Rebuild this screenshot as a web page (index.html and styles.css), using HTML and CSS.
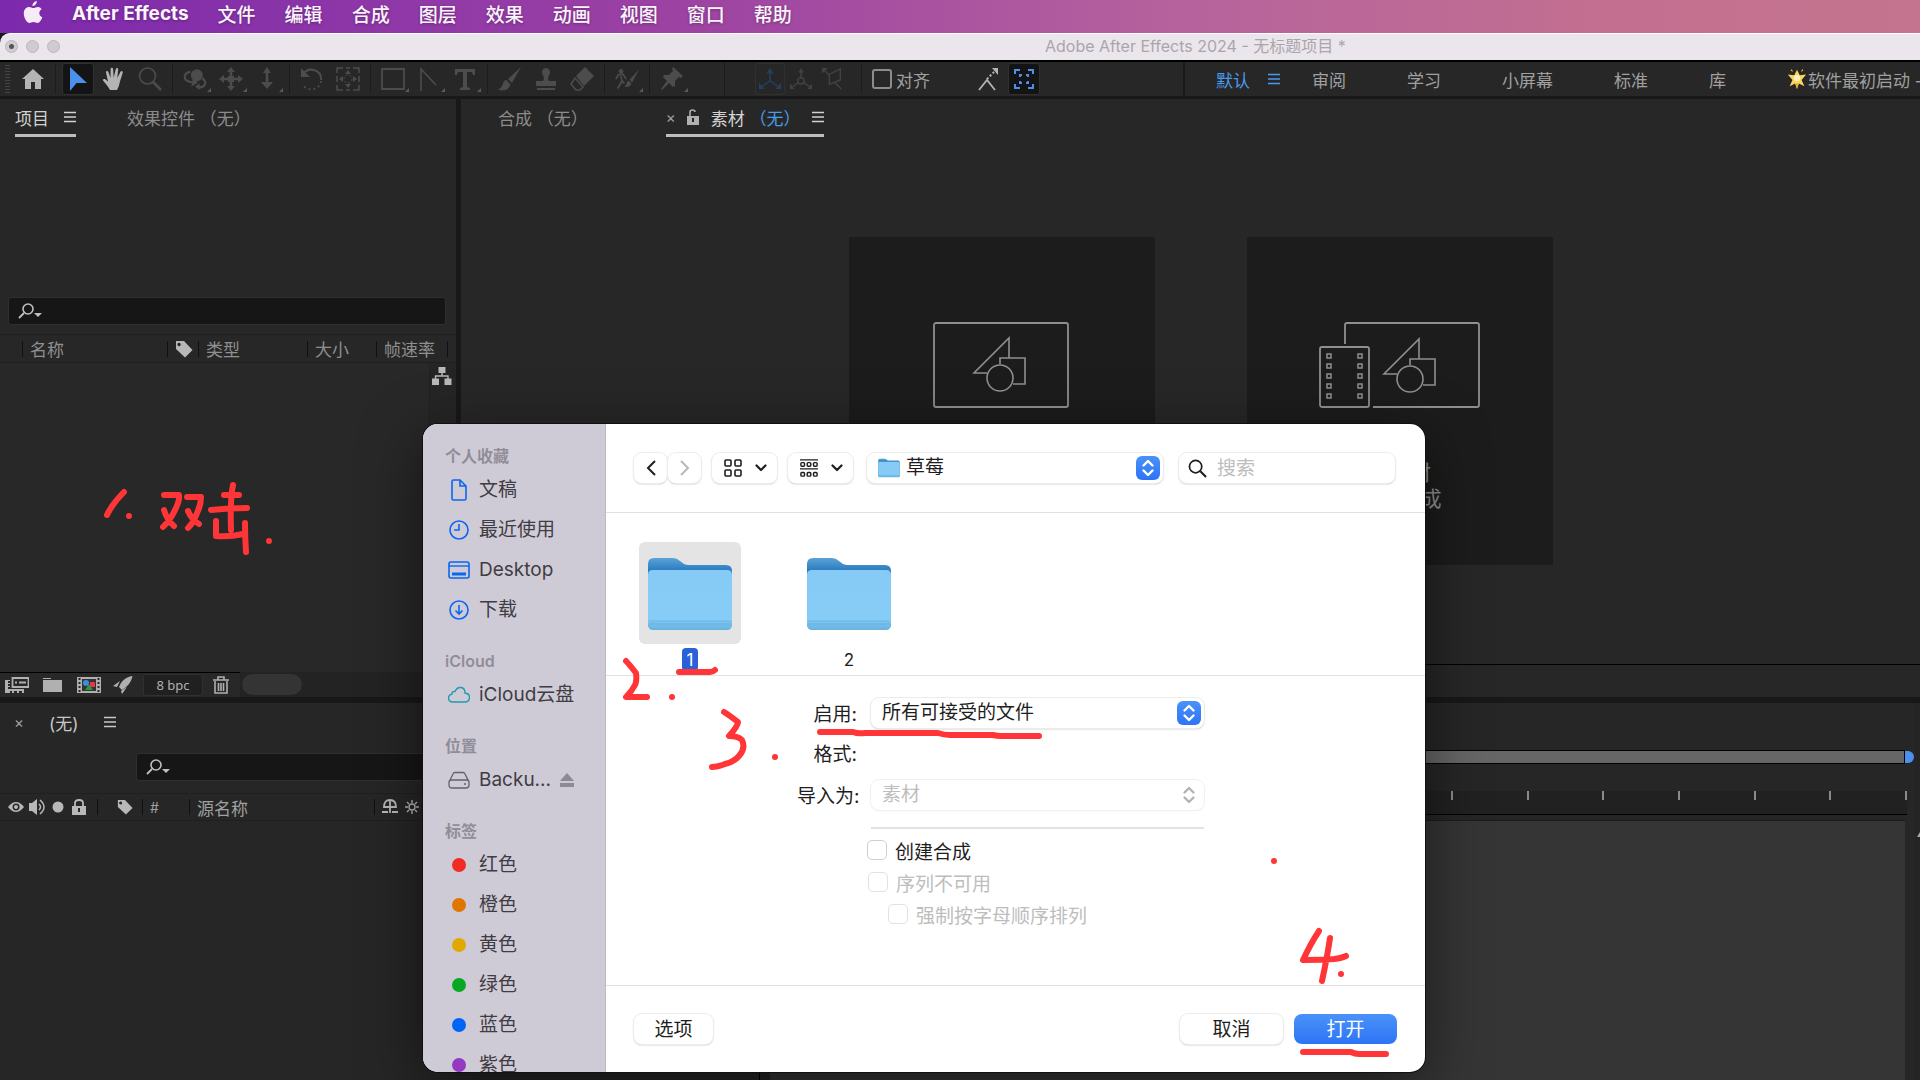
FILE: index.html
```
<!DOCTYPE html>
<html lang="zh-CN">
<head>
  <meta charset="UTF-8">
  <meta name="viewport" content="width=device-width, initial-scale=1.0">
  <title>Adobe After Effects 2024 - 无标题项目</title>
  <link rel="stylesheet" href="styles.css">
</head>
<body>
  <!-- 公用图标 -->
  <svg class="sprite" width="0" height="0" aria-hidden="true">
    <linearGradient id="folder-front" x1="0" y1="0" x2="0" y2="1">
      <stop offset="0" stop-color="#86cbf6"/>
      <stop offset="0.84" stop-color="#86ccf7"/>
      <stop offset="0.86" stop-color="#7cc5f1"/>
      <stop offset="1" stop-color="#68b2e0"/>
    </linearGradient>
    <linearGradient id="folder-back" x1="0" y1="0" x2="0" y2="1">
      <stop offset="0" stop-color="#5ba3d6"/>
      <stop offset="0.16" stop-color="#2f7fc2"/>
      <stop offset="1" stop-color="#2f7fc2"/>
    </linearGradient>
    <symbol id="i-folder" viewBox="0 0 86 74">
      <path d="M1 67V7q0-6 6-6h19q4 0 7 3l4 3q2 1 5 1h37q6 0 6 6v53q0 5-5 5H6q-5 0-5-5z" fill="url(#folder-back)"/>
      <path d="M1 67V18q0-5 5-5h74q5 0 5 5v49q0 6-5 6H6q-5 0-5-6z" fill="url(#folder-front)"/>
      <path d="M2 64h82M2 67h82" stroke="#5faadb" stroke-width="0.6"/>
    </symbol>
    <symbol id="i-menu" viewBox="0 0 12 12">
      <path d="M0 1.500h12M0 6h12M0 10.500h12" stroke="currentColor" stroke-width="1.500"/>
    </symbol>
    <symbol id="i-find" viewBox="0 0 24 16">
      <circle cx="10" cy="6" r="5" fill="none" stroke="currentColor" stroke-width="1.600"/>
      <path d="M6 10l-5 5" stroke="currentColor" stroke-width="1.800"/>
      <path d="M16 10h8l-4 4z" fill="currentColor"/>
    </symbol>
    <symbol id="i-tag" viewBox="0 0 18 18">
      <path fill="currentColor" fill-rule="evenodd" d="M1 1h8l8.500 9-7.500 7.500L1 9zM4 2.800a1.700 1.700 0 1 0 .1 3.400A1.700 1.700 0 0 0 4 2.800z"/>
    </symbol>
    <symbol id="i-updown" viewBox="0 0 24 24">
      <path d="M7.500 9.500L12 5l4.500 4.500M7.500 14.500L12 19l4.500-4.500" fill="none" stroke="currentColor" stroke-width="2.400" stroke-linecap="round" stroke-linejoin="round"/>
    </symbol>
    <symbol id="i-down" viewBox="0 0 12 8">
      <path d="M1.500 1.500L6 6l4.500-4.500" fill="none" stroke="currentColor" stroke-width="2.200" stroke-linecap="round" stroke-linejoin="round"/>
    </symbol>
    <symbol id="i-shapes" viewBox="0 0 56 56">
      <g fill="none" stroke="currentColor" stroke-width="1.600">
        <path d="M15 37H2L37 2v20M28 28v-6h25v26H41"/>
        <circle cx="28" cy="42" r="13"/>
      </g>
    </symbol>
  </svg>

  <!-- 系统菜单栏 -->
  <nav class="menubar">
    <svg class="apple" viewBox="0 0 20 24"><path fill="#f6ecf8" d="M13.800 0c.2 2.700-2 5-4.300 5C9.200 2.500 11.500.2 13.800 0zM18.600 8.200c-3.400 2-2.900 6.600.7 8-.9 2.700-2.700 5.700-4.700 5.700-1.600 0-2.200-1-4.100-1s-2.600 1-4 1C3.700 22 .8 16.800.8 12.500.8 8.300 3.400 6 6 6c1.800 0 3 1.100 4.400 1.100S13 5.900 15 5.900c1.400 0 2.800.8 3.600 2.300z"/></svg>
    <b class="app-name">After Effects</b>
    <a href="#">文件</a>
    <a href="#">编辑</a>
    <a href="#">合成</a>
    <a href="#">图层</a>
    <a href="#">效果</a>
    <a href="#">动画</a>
    <a href="#">视图</a>
    <a href="#">窗口</a>
    <a href="#">帮助</a>
  </nav>

  <!-- 窗口标题栏 -->
  <header class="titlebar">
    <div class="lights"><i class="edited"></i><i></i><i></i></div>
    <span class="title">Adobe After Effects 2024 - 无标题项目 *</span>
  </header>

  <!-- 工具栏 -->
  <div class="toolbar">
    <i class="grip"></i>
    <button class="tool lit" aria-label="主页"><svg viewBox="0 0 24 24"><path fill="currentColor" d="M12 2L1 12h3v10h6v-7h4v7h6V12h3z"/></svg></button>
    <i class="sep"></i>
    <button class="tool active" aria-label="选取"><svg viewBox="0 0 24 24"><path fill="currentColor" d="M4 0v24l6.500-8H21z"/></svg></button>
    <button class="tool lit" aria-label="手形"><svg viewBox="0 0 24 24"><path fill="currentColor" d="M8 23C6 19 3 16 1 13.500c-.8-1.200 1-2.200 2.200-1.200L6 14.500 4 5.500c-.4-1.800 1.900-2.200 2.400-.5L8.500 11 8.600 2c0-1.800 2.400-1.800 2.500 0l.6 8.500L13.800 2c.4-1.700 2.600-1.200 2.400.5L15.300 11l3.200-6.200c.8-1.500 2.700-.6 2.200 1L17.800 15c-.6 3-1.300 5.500-2.800 8z"/></svg></button>
    <button class="tool" aria-label="缩放"><svg viewBox="0 0 24 24"><circle cx="9.500" cy="9" r="8" fill="none" stroke="currentColor" stroke-width="1.600"/><path d="M15 15l8 8" stroke="currentColor" stroke-width="2.600"/></svg></button>
    <i class="sep"></i>
    <button class="tool more" aria-label="绕光标旋转"><svg viewBox="0 0 26 24"><circle cx="15" cy="8" r="6.500" fill="currentColor"/><path d="M8 4C0 6 0 13 7 15l6 1M21 11c5 4 4 10-4 10" fill="none" stroke="currentColor" stroke-width="2.400"/><path d="M11 10l5 6-7 4zM18 17v7l-5-4z" fill="currentColor"/></svg></button>
    <button class="tool more" aria-label="平移"><svg viewBox="0 0 24 24"><path d="M12 3v18M3 12h18" stroke="currentColor" stroke-width="2.600"/><path fill="currentColor" d="M12 0l4 5H8zM12 24l4-5H8zM0 12l5-4v8zM24 12l-5-4v8zM9 9h6v6H9z"/></svg></button>
    <button class="tool more" aria-label="推拉"><svg viewBox="0 0 24 24"><path d="M12 3v16" stroke="currentColor" stroke-width="2.600"/><path fill="currentColor" d="M12 0l4 6H8zM12 22l6-7H6z"/></svg></button>
    <i class="sep"></i>
    <button class="tool" aria-label="旋转"><svg viewBox="0 0 24 24"><path d="M3 7c6-8 19-4 18 6" fill="none" stroke="currentColor" stroke-width="2"/><path d="M21 14c-1 9-13 12-19 3" fill="none" stroke="currentColor" stroke-width="1.800" stroke-dasharray="2 3"/><path fill="currentColor" d="M1 1v9h9z"/></svg></button>
    <button class="tool" aria-label="向后平移"><svg viewBox="0 0 24 24"><path d="M1 6V1h6M10 1h4M17 1h6v5M23 9v6M23 18v5h-6M14 23h-4M7 23H1v-5M1 15V9" fill="none" stroke="currentColor" stroke-width="1.600"/><path fill="currentColor" d="M12 3l3 4H9zM12 21l3-4H9zM3 12l4-3v6zM21 12l-4-3v6z"/><circle cx="12" cy="12" r="4" fill="none" stroke="currentColor" stroke-dasharray="2 2"/></svg></button>
    <i class="sep"></i>
    <button class="tool more" aria-label="矩形"><svg viewBox="0 0 24 24"><path d="M1 2h22v20H1z" fill="none" stroke="currentColor" stroke-width="1.800"/></svg></button>
    <button class="tool more" aria-label="钢笔"><svg viewBox="0 0 24 24"><path d="M4 24V2l15 16" fill="none" stroke="currentColor" stroke-width="1.600"/></svg></button>
    <button class="tool more" aria-label="文字"><svg viewBox="0 0 24 24"><path d="M2 2h20v6h-2l-1-3h-5v15l3 1v2H7v-2l3-1V5H5L4 8H2z" fill="currentColor"/></svg></button>
    <i class="sep"></i>
    <button class="tool" aria-label="画笔"><svg viewBox="0 0 24 24"><path fill="currentColor" d="M23 0L10 12l4 4zM8.500 13c-3 0-3 3-4.500 6-1 2-2.500 3-4 3.500 6 2 11 .5 12.500-5z"/></svg></button>
    <button class="tool" aria-label="仿制图章"><svg viewBox="0 0 24 24"><path fill="currentColor" d="M12 1a4.500 4.500 0 0 0-3 7.500c1.500 2 1 4 0 5.500H2v5h20v-5h-7c-1-1.500-1.500-3.500 0-5.500A4.500 4.500 0 0 0 12 1zM3 21h18v2H3z"/></svg></button>
    <button class="tool" aria-label="橡皮擦"><svg viewBox="0 0 24 24"><path fill="currentColor" d="M15 0l9 9-10 10-8-10z"/><path d="M5 11l8 9-3 3H6l-5-6z" fill="none" stroke="currentColor" stroke-width="1.600"/></svg></button>
    <i class="sep"></i>
    <button class="tool more" aria-label="Roto 笔刷"><svg viewBox="0 0 28 24"><circle cx="7" cy="3" r="2.600" fill="currentColor"/><path d="M1 12l3-5 5-1 4 6M7 8l1 7-5 8M8 14l3 3" fill="none" stroke="currentColor" stroke-width="2"/><path fill="currentColor" d="M28 1L17 13l3 3zM16 14c-3 1-2 5-5 7 5 1 8-1 8-4z"/></svg></button>
    <i class="sep"></i>
    <button class="tool more" aria-label="人偶位置控点"><svg viewBox="0 0 24 24"><path fill="currentColor" d="M13 0l10 9-2 2-2-1-4 4v5l-2 1-4-4-7 7-1-1 6-8-4-4 1-2h5l4-4-1-2z"/></svg></button>
    <i class="sep wide"></i>
    <button class="axis boxed" aria-label="本地轴模式"><svg viewBox="0 0 24 24"><path d="M12 3v11L2 21M12 14l10 7" fill="none" stroke="currentColor" stroke-width="1.600"/><path fill="currentColor" d="M12 0l4 6H8zM0 23v-7l6 7zM24 23v-7l-6 7z"/></svg></button>
    <button class="axis" aria-label="世界轴模式"><svg viewBox="0 0 24 24"><path d="M12 3v9M9 16l-7 5M15 16l7 5" fill="none" stroke="currentColor" stroke-width="1.600"/><circle cx="12" cy="14" r="3.500" fill="none" stroke="currentColor" stroke-width="1.600"/><path fill="currentColor" d="M12 0l3 5H9zM0 23v-6l5 6zM24 23v-6l-5 6z"/></svg></button>
    <button class="axis" aria-label="视图轴模式"><svg viewBox="0 0 24 24"><path d="M2 2l6 6v10l12-5V1L8 7M14 16l7 7" fill="none" stroke="currentColor" stroke-width="1.600"/><path fill="currentColor" d="M0 0h6L0 6z"/></svg></button>
    <i class="sep"></i>
    <label class="snap"><input type="checkbox">对齐</label>
    <button class="tool lit" aria-label="对齐边缘"><svg viewBox="0 0 24 24"><path d="M3 23l8-10 8 10" fill="none" stroke="currentColor" stroke-width="1.800"/><path d="M11 12l8-8" stroke="currentColor" stroke-width="2" stroke-dasharray="2 2"/><path fill="currentColor" d="M16 1h6v7z"/></svg></button>
    <button class="tool active" aria-label="对齐特征"><svg viewBox="0 0 24 24"><g fill="none" stroke="currentColor" stroke-width="2"><path d="M3 7V3h5M16 3h5v4M21 17v4h-5M8 21H3v-4"/><path d="M8 10V8h2M14 8h2v2M16 14v2h-2M10 16H8v-2"/></g></svg></button>
    <div class="workspaces">
      <a class="current" href="#">默认</a>
      <svg class="menu-icon current"><use href="#i-menu"/></svg>
      <a href="#">审阅</a>
      <a href="#">学习</a>
      <a href="#">小屏幕</a>
      <a href="#">标准</a>
      <a href="#">库</a>
      <a class="custom" href="#"><svg viewBox="0 0 20 24"><path fill="#fbd45e" d="M10 2l3 6 7-1-5 6 3 7-6-3-2 6-2-6-6 3 3-7-5-6 7 1z"/><path fill="#f0a72e" d="M10 23l-2-6h4zM4 1l2 3-3-1zM16 1l-2 3 3-1z"/><circle cx="10" cy="11" r="3.500" fill="#fff3c0"/></svg>软件最初启动 -</a>
    </div>
  </div>

  <main class="upper">
    <!-- 项目面板 -->
    <section class="panel project">
      <div class="tabs">
        <div class="tab selected">项目 <svg class="menu-icon"><use href="#i-menu"/></svg></div>
        <div class="tab dim">效果控件 （无）</div>
      </div>
      <label class="find project-find"><svg><use href="#i-find"/></svg><input type="text" aria-label="搜索项目"></label>
      <table class="columns">
        <thead>
          <tr>
            <th class="c-pad"></th>
            <th class="c-name"><span>名称</span></th>
            <th class="c-tag"><span><svg><use href="#i-tag"/></svg></span></th>
            <th class="c-type"><span>类型</span></th>
            <th class="c-size"><span>大小</span></th>
            <th class="c-rate"><span>帧速率</span></th>
            <th><span></span></th>
          </tr>
        </thead>
      </table>
      <div class="project-list">
        <button class="flow" aria-label="项目流程图"><svg viewBox="0 0 20 18"><path fill="currentColor" d="M6.500 0h7v6h-7zM0 11.500h7V18H0zM12.500 11.500h7V18h-7z"/><path d="M10 6v3M3.500 12V9h12.500v3" fill="none" stroke="currentColor" stroke-width="1.400"/></svg></button>
      </div>
      <div class="project-foot">
        <div class="foot-tools">
          <button aria-label="解释素材"><svg viewBox="0 0 24 16"><path fill="currentColor" d="M0 3h5v1H3v2h2v1H3v2h2v1H3v2h16v4h-2v-2h-3v2h-2v-2H9v2H7v-2H5v2H0z"/><path d="M7.500 1h16v9h-16z" fill="#282828" stroke="currentColor" stroke-width="1.800"/><path d="M10 5.500h2M14 5.500h7" stroke="currentColor" stroke-width="1.800"/></svg></button>
          <button aria-label="新建文件夹"><svg viewBox="0 0 24 16"><path fill="currentColor" d="M2 1h8v1H2zM2 3h19v12H2z"/></svg></button>
          <button aria-label="新建合成"><svg viewBox="0 0 24 16"><path fill="#b0b0b0" d="M0 0h24v16H0z"/><path d="M2.500 1v15M21.500 1v15" stroke="#282828" stroke-width="2" stroke-dasharray="2 2"/><path fill="#333" d="M5 2h14v12H5z"/><circle cx="9" cy="6" r="3" fill="#3d8be8"/><path fill="#e34" d="M13 5h5v5h-5z"/><path fill="#2b9a33" d="M12 7l4 6H8z"/></svg></button>
          <button aria-label="项目设置"><svg viewBox="0 0 20 18"><path fill="currentColor" d="M19.500 0C12 1 8 6 6 11l3 3c5-3 9-7 10.500-14zM7 5L0 10l4 1zM14 11l-5 7-1-3z"/></svg></button>
          <button class="depth">8 bpc</button>
          <button aria-label="删除"><svg viewBox="0 0 16 18"><path d="M0 4h16M5 4V1h6v3M2 5v12h12V5M5.500 7v8M8 7v8M10.500 7v8" fill="none" stroke="currentColor" stroke-width="1.600"/></svg></button>
        </div>
        <i class="scroll-thumb"></i>
      </div>
    </section>

    <!-- 合成 / 素材面板 -->
    <section class="panel viewer">
      <div class="tabs">
        <div class="tab dim">合成 （无）</div>
        <div class="tab selected footage">
          <button class="close" aria-label="关闭">×</button>
          <svg class="lock" viewBox="0 0 14 16"><path fill="currentColor" fill-rule="evenodd" d="M1 7h12v9H1zM6 9v4h2V9z"/><path d="M4 7V3q0-2 2.500-2T9 3" fill="none" stroke="currentColor" stroke-width="1.600"/></svg>
          <span>素材 <em>（无）</em></span>
          <svg class="menu-icon"><use href="#i-menu"/></svg>
        </div>
      </div>
      <div class="starters">
        <button class="starter">
          <svg class="art" viewBox="0 0 162 86"><rect x="13" y="1" width="134" height="84" rx="2" fill="none" stroke="currentColor" stroke-width="1.800"/><use href="#i-shapes" x="51" y="14" width="56" height="56"/></svg>
          <span>新建合成</span>
        </button>
        <button class="starter">
          <svg class="art" viewBox="0 0 162 86"><g fill="none" stroke="currentColor" stroke-width="1.800"><path d="M26 22V3q0-2 2-2h130q2 0 2 2v80q0 2-2 2H54"/><rect x="1" y="25" width="49" height="60" rx="2"/></g><g fill="none" stroke="currentColor" stroke-width="1.500"><path d="M8 32h4v4H8zM8 42h4v4H8zM8 52h4v4H8zM8 62h4v4H8zM8 72h4v4H8zM39 32h4v4h-4zM39 42h4v4h-4zM39 52h4v4h-4zM39 62h4v4h-4zM39 72h4v4h-4z"/></g><use href="#i-shapes" x="63" y="15" width="56" height="56"/></svg>
          <span>从素材<br>新建合成</span>
        </button>
      </div>
      <div class="viewer-foot"></div>
    </section>
  </main>

  <!-- 时间轴 -->
  <section class="timeline">
    <div class="layers">
      <div class="timeline-tab">
        <button class="close" aria-label="关闭">×</button>
        <span>(无)</span>
        <svg class="menu-icon"><use href="#i-menu"/></svg>
      </div>
      <label class="find layer-find"><svg><use href="#i-find"/></svg><input type="text" aria-label="搜索图层"></label>
      <div class="layer-head">
        <div class="switches">
          <svg viewBox="0 0 16 16"><path fill="currentColor" fill-rule="evenodd" d="M0 8q8-10 16 0-8 10-16 0zM8 4.500a3.500 3.500 0 1 0 .1 7 3.500 3.500 0 0 0-.1-7z"/><circle cx="8" cy="8" r="2" fill="currentColor"/></svg>
          <svg viewBox="0 0 16 16"><path fill="currentColor" d="M0 4h3l5-4v16l-5-4H0z"/><path d="M10 5q3 3 0 6M11 1q8 7 0 14" fill="none" stroke="currentColor" stroke-width="1.500"/></svg>
          <svg viewBox="0 0 16 16"><circle cx="8" cy="8" r="5.500" fill="currentColor"/></svg>
          <svg viewBox="0 0 16 16"><path fill="currentColor" fill-rule="evenodd" d="M1 7h14v9H1zM7 9v4h2V9z"/><path d="M4 7V4q0-3 4-3t4 3v3" fill="none" stroke="currentColor" stroke-width="1.800"/></svg>
        </div>
        <div class="head-cell h-tag"><svg><use href="#i-tag"/></svg></div>
        <div class="head-cell h-num">#</div>
        <div class="head-cell h-source">源名称</div>
        <div class="head-cell h-modes">
          <svg viewBox="0 0 16 16"><path d="M2 8q0-7 6-7t6 7zM8 1v13M0 13h6M10 13h6" fill="none" stroke="currentColor" stroke-width="1.800"/></svg>
          <svg viewBox="0 0 16 16"><circle cx="8" cy="8" r="3" fill="none" stroke="currentColor" stroke-width="1.400"/><path d="M8 1v3M8 12v3M1 8h3M12 8h3M3 3l2 2M11 11l2 2M13 3l-2 2M5 11l-2 2" stroke="currentColor" stroke-width="1.400"/></svg>
        </div>
      </div>
    </div>
    <div class="tracks">
      <div class="work-area"><i class="handle"></i></div>
      <div class="ruler">
        <i></i><i></i><i></i><i></i><i></i><i></i><i></i><i></i>
        <i></i><i></i><i></i><i></i><i></i><i></i><i></i><i></i>
      </div>
      <div class="track-body"></div>
    </div>
    <div class="gutter"><i></i></div>
  </section>

  <!-- 导入文件对话框 -->
  <div class="dialog" role="dialog" aria-label="导入文件">
    <aside class="sidebar">
      <h3>个人收藏</h3>
      <a href="#"><svg class="blue" viewBox="0 0 22 22"><path d="M4 2.500Q4 1 5.500 1H12l6 6v12.500q0 1.500-1.500 1.500h-11Q4 21 4 19.500zM12 1v6h6" fill="none" stroke="currentColor" stroke-width="1.600"/></svg>文稿</a>
      <a href="#"><svg class="blue" viewBox="0 0 22 22"><circle cx="11" cy="11" r="9" fill="none" stroke="currentColor" stroke-width="1.600"/><path d="M11 5v6H6" fill="none" stroke="currentColor" stroke-width="1.600"/></svg>最近使用</a>
      <a href="#"><svg class="blue" viewBox="0 0 22 22"><rect x="1" y="3" width="20" height="16" rx="2" fill="none" stroke="currentColor" stroke-width="1.600"/><path d="M1 7h20" stroke="currentColor" stroke-width="1.400"/><path d="M4 15h14" stroke="currentColor" stroke-width="3"/></svg>Desktop</a>
      <a href="#"><svg class="blue" viewBox="0 0 22 22"><circle cx="11" cy="11" r="9" fill="none" stroke="currentColor" stroke-width="1.600"/><path d="M11 6v9M7.500 11.500L11 15l3.500-3.500" fill="none" stroke="currentColor" stroke-width="1.600"/></svg>下载</a>
      <h3>iCloud</h3>
      <a href="#"><svg class="teal" viewBox="0 0 22 22"><path d="M5 18q-4.500 0-4.500-4 0-3 3.500-4 0-3 3-2.500Q9 3 13 3.500t4 5.500q4.500.5 4.500 4.500T17 18z" fill="none" stroke="currentColor" stroke-width="1.400"/></svg>iCloud云盘</a>
      <h3>位置</h3>
      <a href="#"><svg class="gray" viewBox="0 0 22 22"><path d="M1 13l4-8q.5-1.500 2-1.500h8q1.500 0 2 1.500l4 8v3q0 3-3 3H4q-3 0-3-3zq0-2 3-2h14q3 0 3 2" fill="none" stroke="currentColor" stroke-width="1.300"/><circle cx="17" cy="15" r="1" fill="currentColor"/></svg>Backu...<svg class="eject" viewBox="0 0 14 14"><path fill="currentColor" d="M7 0l7 8H0zM0 10h14v4H0z"/></svg></a>
      <h3>标签</h3>
      <a href="#"><i class="dot red"></i>红色</a>
      <a href="#"><i class="dot orange"></i>橙色</a>
      <a href="#"><i class="dot yellow"></i>黄色</a>
      <a href="#"><i class="dot green"></i>绿色</a>
      <a href="#"><i class="dot azure"></i>蓝色</a>
      <a href="#"><i class="dot purple"></i>紫色</a>
    </aside>

    <div class="browser">
      <div class="browser-bar">
        <div class="nav">
          <button class="ctl" aria-label="后退"><svg viewBox="0 0 10 16"><path d="M9 1L2 8l7 7" fill="none" stroke="currentColor" stroke-width="2"/></svg></button>
          <button class="ctl off" aria-label="前进"><svg viewBox="0 0 10 16"><path d="M1 1l7 7-7 7" fill="none" stroke="currentColor" stroke-width="2"/></svg></button>
        </div>
        <button class="ctl view" aria-label="图标视图"><svg class="grid-icon" viewBox="0 0 20 18"><g fill="none" stroke="currentColor" stroke-width="1.600"><rect x="2" y="1" width="6" height="6" rx="1"/><rect x="12" y="1" width="6" height="6" rx="1"/><rect x="2" y="11" width="6" height="6" rx="1"/><rect x="12" y="11" width="6" height="6" rx="1"/></g></svg><svg class="chev"><use href="#i-down"/></svg></button>
        <button class="ctl view" aria-label="分组"><svg class="grid-icon" viewBox="0 0 20 20"><path d="M0 1h20M0 11h20" stroke="currentColor" stroke-width="1.600"/><g fill="none" stroke="currentColor" stroke-width="1.600"><rect x="1" y="4" width="4" height="4" rx="1"/><rect x="8" y="4" width="4" height="4" rx="1"/><rect x="15" y="4" width="4" height="4" rx="1"/><rect x="1" y="15" width="4" height="4" rx="1"/><rect x="8" y="15" width="4" height="4" rx="1"/><rect x="15" y="15" width="4" height="4" rx="1"/></g></svg><svg class="chev"><use href="#i-down"/></svg></button>
        <div class="picker place">
          <svg class="small-folder"><use href="#i-folder"/></svg>
          <select aria-label="位置"><option>草莓</option></select>
          <svg class="stepper"><use href="#i-updown"/></svg>
        </div>
        <label class="search"><svg viewBox="0 0 20 20"><circle cx="8" cy="8" r="6.500" fill="none" stroke="currentColor" stroke-width="1.800"/><path d="M13 13l6 6" stroke="currentColor" stroke-width="2.200"/></svg><input type="text" placeholder="搜索"></label>
      </div>

      <div class="files">
        <button class="file chosen"><span class="thumb"><svg><use href="#i-folder"/></svg></span><span class="name">1</span></button>
        <button class="file"><span class="thumb"><svg><use href="#i-folder"/></svg></span><span class="name">2</span></button>
      </div>

      <div class="options">
        <label for="enable">启用:</label>
        <div class="picker">
          <select id="enable"><option>所有可接受的文件</option></select>
          <svg class="stepper"><use href="#i-updown"/></svg>
        </div>
        <span class="format">格式:</span>
        <span></span>
        <label for="import-as">导入为:</label>
        <div class="picker off">
          <select id="import-as" disabled><option>素材</option></select>
          <svg class="stepper"><use href="#i-updown"/></svg>
        </div>
        <div class="checks">
          <label><input type="checkbox">创建合成</label>
          <label class="off"><input type="checkbox" disabled>序列不可用</label>
          <label class="off nested"><input type="checkbox" disabled>强制按字母顺序排列</label>
        </div>
      </div>

      <div class="actions">
        <button class="ctl small">选项</button>
        <button class="ctl">取消</button>
        <button class="ctl primary">打开</button>
      </div>
    </div>
  </div>

  <!-- 手写步骤标注 -->
  <svg class="ink" viewBox="0 0 1920 1080" aria-hidden="true">
    <g fill="none" stroke="#ff3537" stroke-width="6" stroke-linecap="round" stroke-linejoin="round">
      <path d="M124 492Q112 504 107 515M129 516v.1"/>
      <path d="M164 495h15q1 5-4 15-4 9-12 17M164 510q3 10 10 16M187 497h14q0 8-4 16-3 9-9 15M188 511q4 9 11 13"/>
      <path d="M233 485q-3 14-2 45M224 495h15M211 510q18-2 36-2M216 521v15q14 1 27-2M245 523q0 14 1 29M269 541v.1"/>
      <path d="M626 661q3 3 10 12 1 8-1 12-3 6-9 12h21M672 697v.1"/>
      <path d="M679 672h31q3 0 5-2"/>
      <path d="M724 712q5 3 14 10 0 4-9 14 9 0 13 4 4 8-3 16-5 6-14 8-8 3-13 3M775 757v.1"/>
      <path d="M820 732h33q5 2 12 1h73q6 2 12 2h43q4 1 8 1h38"/>
      <path d="M1319 931q-8 12-16 29 17 0 31-1 8-1 12-3M1330 938q-3 20-8 43M1341 974v.1"/>
      <path d="M1303 1052h48q4 2 8 2h27M1274 861v.1"/>
    </g>
  </svg>
</body>
</html>
```
FILE: styles.css
```
* {
  box-sizing: border-box;
}
body {
  margin: 0;
  height: 100vh;
  display: flex;
  flex-direction: column;
  overflow: hidden;
  position: relative;
  background: #181818;
  color: #a0a0a0;
  font-family: Inter, "Noto Sans CJK SC", sans-serif;
  font-size: 17px;
}
button,
input,
select {
  font: inherit;
  color: inherit;
  margin: 0;
}
button {
  background: none;
  border: none;
  padding: 0;
}
a {
  color: inherit;
  text-decoration: none;
}
svg {
  display: block;
  flex: none;
}
.sprite {
  position: absolute;
}

/* 菜单栏 */
.menubar {
  flex: none;
  height: 33px;
  padding: 0 0 7px 23px;
  display: flex;
  align-items: center;
  gap: 29px;
  font-size: 19px;
  font-weight: 500;
  color: #fbf4fc;
  white-space: nowrap;
  background: linear-gradient(90deg, #7c29ad 0%, #9c42a3 35%, #b6639d 62%, #c37090 85%, #c4748e 100%);
  text-shadow: 0 1px 3px rgba(0, 0, 0, 0.3);
}
.apple {
  width: 20px;
  height: 24px;
}
.app-name {
  font-weight: 700;
}

/* 标题栏 */
.titlebar {
  flex: none;
  height: 29px;
  display: grid;
  grid-template-columns: 1045px 1fr;
  align-items: center;
  background: #ebe6ec;
  border-top: 1px solid #fff;
  border-bottom: 2px solid #000;
  border-radius: 10px 0 0 0;
  color: #aaa5ab;
  font-size: 16px;
  line-height: 24px;
  padding-bottom: 2px;
  white-space: nowrap;
}
.lights {
  display: flex;
  gap: 8px;
  padding-left: 5px;
}
.lights i {
  width: 13px;
  height: 13px;
  border-radius: 50%;
  background: #d0cbd1;
  border: 1px solid #bcb7bd;
}
.lights .edited {
  background: radial-gradient(#555 2px, #d0cbd1 3px);
}

/* 工具栏 */
.toolbar {
  flex: none;
  height: 34px;
  display: flex;
  align-items: center;
  background: #272727;
  overflow: hidden;
}
.grip {
  flex: none;
  width: 5px;
  height: 28px;
  margin: 0 5px;
  background: repeating-linear-gradient(#444 0 1px, #272727 1px 3px);
}
.tool {
  flex: none;
  width: 36px;
  height: 34px;
  display: flex;
  align-items: center;
  justify-content: center;
  color: #4c4c4c;
  position: relative;
}
.tool svg {
  width: 24px;
  height: 24px;
}
.tool.lit {
  color: #b4b4b4;
}
.tool.active {
  width: 32px;
  height: 32px;
  margin: 0 2px;
  background: #141414;
  border: 1px solid #303030;
  border-radius: 3px;
  color: #4c90ee;
}
.more::after {
  content: "";
  position: absolute;
  right: 2px;
  bottom: 4px;
  border-left: 4px solid transparent;
  border-bottom: 4px solid #5a5a5a;
}
.sep {
  flex: none;
  width: 1px;
  height: 30px;
  margin: 0 4px;
  background: #1c1c1c;
}
.sep.wide {
  height: 34px;
  margin: 0 30px 0 34px;
}
.axis {
  flex: none;
  width: 32px;
  height: 32px;
  display: flex;
  align-items: center;
  justify-content: center;
  color: #424242;
}
.axis svg {
  width: 22px;
  height: 22px;
}
.axis.boxed {
  width: 30px;
  border: 1px solid #303030;
  border-radius: 3px;
  color: #25405f;
}
.axis + .sep {
  margin: 0 10px 0 12px;
}
.snap {
  flex: none;
  display: flex;
  align-items: center;
  gap: 4px;
  margin-right: 40px;
  white-space: nowrap;
}
.snap input {
  appearance: none;
  width: 20px;
  height: 20px;
  border: 2px solid #8c8c8c;
  border-radius: 3px;
}
.workspaces {
  flex: 1;
  min-width: 0;
  align-self: stretch;
  display: flex;
  align-items: center;
  gap: 61px;
  margin-left: 141px;
  padding-left: 31px;
  border-left: 2px solid #1a1a1a;
  white-space: nowrap;
}
.workspaces a {
  flex: none;
}
.workspaces .menu-icon {
  margin: 0 -29px 0 -43px;
}
.workspaces .current {
  color: #4a9bea;
}
.custom {
  display: flex;
  gap: 1px;
  align-items: center;
}
.custom svg {
  width: 20px;
  height: 22px;
}
.menu-icon {
  width: 12px;
  height: 12px;
}

/* 面板 */
.upper {
  flex: none;
  height: 598px;
  margin-top: 3px;
  display: grid;
  grid-template-columns: 456px 1fr;
  gap: 5px;
}
.panel {
  background: #272727;
  display: flex;
  flex-direction: column;
  min-width: 0;
}
.tabs {
  height: 38px;
  display: flex;
  gap: 51px;
  padding-left: 15px;
  white-space: nowrap;
}
.tab {
  display: flex;
  align-items: center;
  gap: 15px;
  padding-top: 1px;
  border-bottom: 3px solid transparent;
}
.tab.dim {
  color: #8c8c8c;
}
.tab.selected {
  color: #d2d2d2;
  border-bottom-color: #bdbdbd;
}
.tab em {
  font-style: normal;
  color: #4a9bea;
}
.viewer .tabs {
  padding-left: 37px;
  gap: 78px;
}
.tab.footage {
  gap: 11px;
}
.close {
  width: 9px;
  font-size: 15px;
  color: #a0a0a0;
}
.lock {
  width: 14px;
  height: 16px;
  color: #b0b0b0;
}
.find {
  height: 28px;
  display: flex;
  align-items: center;
  gap: 8px;
  padding-left: 9px;
  background: #161616;
  border: 1px solid #2f2f2f;
  border-radius: 3px;
}
.find svg {
  width: 24px;
  height: 16px;
  color: #c0c0c0;
}
.find input {
  flex: 1;
  min-width: 0;
  background: none;
  border: none;
}
.project-find {
  margin: 160px 10px 9px 8px;
}
.columns {
  width: 100%;
  table-layout: fixed;
  border-collapse: collapse;
  color: #8f8f8f;
}
.columns th {
  height: 28px;
  padding: 0;
  text-align: left;
  font-weight: 400;
  border-top: 1px solid #1f1f1f;
  border-bottom: 1px solid #1f1f1f;
}
.columns span {
  display: flex;
  align-items: center;
  height: 16px;
  padding-left: 7px;
  border-left: 1px solid #101010;
}
.columns svg,
.h-tag svg {
  width: 18px;
  height: 18px;
  color: #b8b8b8;
}
.c-pad { width: 22px; }
.c-name { width: 145px; }
.c-tag { width: 31px; }
.c-type { width: 109px; }
.c-size { width: 69px; }
.c-rate { width: 71px; }
.project-list {
  flex: 1;
  display: flex;
  justify-content: flex-end;
  background: #282828;
}
.flow {
  width: 27px;
  padding: 4px 2px;
  border-left: 1px solid #222;
  background: #252525;
  color: #b8b8b8;
  display: flex;
}
.flow svg {
  width: 20px;
  height: 18px;
}
.project-foot {
  height: 25px;
  display: flex;
  align-items: center;
  background: #232323;
  color: #b0b0b0;
}
.foot-tools {
  align-self: stretch;
  width: 240px;
  padding-left: 5px;
  display: flex;
  align-items: center;
  gap: 12px;
  background: #282828;
  border-top: 1px solid #000;
}
.foot-tools svg {
  width: 24px;
  height: 18px;
}
.foot-tools button:nth-child(4) svg {
  width: 20px;
}
.foot-tools button:last-child svg {
  width: 16px;
}
.depth {
  width: 60px;
  height: 22px;
  margin-left: -2px;
  background: #202020;
  border: 1px solid #303030;
  border-radius: 3px;
  font-family: "Noto Sans", sans-serif;
  font-size: 13px;
  line-height: 20px;
}
.foot-tools .depth + button {
  margin-left: -2px;
}
.scroll-thumb {
  width: 60px;
  height: 21px;
  margin-left: 2px;
  border-radius: 11px;
  background: #343434;
}
.starters {
  flex: 1;
  display: flex;
  justify-content: center;
  align-items: center;
  gap: 92px;
  padding-left: 20px;
}
.starter {
  width: 306px;
  height: 328px;
  padding-top: 85px;
  display: flex;
  flex-direction: column;
  align-items: center;
  gap: 52px;
  background: #1c1c1c;
  border-radius: 2px;
  font-size: 21px;
  line-height: 26px;
  color: #8f8f8f;
}
.art {
  width: 162px;
  height: 86px;
}
.viewer-foot {
  height: 33px;
  border-top: 1px solid #000;
}

/* 时间轴 */
.timeline {
  flex: 1;
  margin-top: 6px;
  display: flex;
  min-height: 0;
  background: #262626;
}
.layers {
  width: 760px;
  border-right: 1px solid #000;
}
.timeline-tab {
  height: 38px;
  display: flex;
  align-items: center;
  padding-left: 14px;
  gap: 26px;
  color: #c8c8c8;
}
.layer-find {
  margin: 12px 10px 12px 136px;
}
.layer-head {
  height: 28px;
  display: flex;
  align-items: center;
  color: #a0a0a0;
  border-top: 1px solid #1f1f1f;
  border-bottom: 1px solid #1f1f1f;
}
.switches {
  width: 97px;
  display: flex;
  gap: 5px;
  padding-left: 8px;
}
.layer-head svg {
  width: 16px;
  height: 16px;
  color: #b8b8b8;
}
.head-cell {
  height: 16px;
  display: flex;
  align-items: center;
  gap: 6px;
  padding-left: 7px;
  border-left: 1px solid #101010;
}
.h-tag {
  width: 45px;
  padding-left: 19px;
}
.h-num {
  width: 47px;
  font-size: 14px;
}
.h-source {
  width: 185px;
}
.tracks {
  flex: 1;
  padding: 47px 0 0 10px;
  display: flex;
  flex-direction: column;
}
.work-area {
  height: 14px;
  margin-right: 10px;
  margin-bottom: 27px;
  border: 1px solid #000;
  background: #666;
  position: relative;
}
.handle {
  position: absolute;
  top: 0;
  right: -10px;
  width: 9px;
  height: 12px;
  border-radius: 0 6px 6px 0;
  background: #4c90ee;
}
.ruler {
  height: 24px;
  margin-right: 8px;
  display: flex;
  justify-content: space-between;
  background: #212121;
  border-bottom: 1px solid #000;
}
.ruler i {
  width: 2px;
  height: 9px;
  background: #8a8a8a;
}
.track-body {
  flex: 1;
  margin: 5px 10px 0 0;
  background: #353535;
  border-top: 1px solid #1c1c1c;
}
.gutter {
  width: 5px;
  padding-top: 129px;
  background: #242424;
}
.gutter i {
  display: block;
  margin-left: 2px;
  border-left: 3px solid transparent;
  border-bottom: 5px solid #aaa;
}

/* 导入对话框 */
.dialog {
  position: absolute;
  left: 423px;
  top: 424px;
  width: 1002px;
  bottom: 8px;
  display: flex;
  overflow: hidden;
  border-radius: 15px;
  background: #fff;
  color: #1e1e1e;
  font-size: 19px;
  box-shadow: 0 0 0 1px #111, 0 16px 60px rgba(0, 0, 0, 0.5);
}
.sidebar {
  width: 183px;
  padding: 19px 0 0 22px;
  overflow: hidden;
  background: #cfcbd6;
  border-right: 1px solid #bebac4;
  color: #3f3c44;
  white-space: nowrap;
}
.sidebar h3 {
  margin: 0;
  height: 27px;
  line-height: 27px;
  font-size: 16px;
  font-weight: 600;
  color: #918d98;
}
.sidebar a + h3 {
  margin-top: 18px;
}
.sidebar a {
  height: 40px;
  display: flex;
  align-items: center;
  gap: 9px;
  padding-left: 3px;
  line-height: 24px;
}
.sidebar svg {
  width: 22px;
  height: 22px;
}
.blue { color: #0a66f0; }
.teal { color: #1f9bb0; }
.gray { color: #65616b; }
.sidebar .eject {
  width: 14px;
  height: 14px;
  color: #8d8995;
}
.dot {
  width: 14px;
  height: 14px;
  margin: 0 4px;
  border-radius: 50%;
}
.red { background: #f22c25; }
.orange { background: #e07500; }
.yellow { background: #dfa900; }
.green { background: #09a823; }
.azure { background: #0064f5; }
.purple { background: #9539c2; }

.browser {
  flex: 1;
  min-width: 0;
  display: flex;
  flex-direction: column;
}
.browser-bar {
  height: 89px;
  padding: 0 30px 0 28px;
  display: flex;
  align-items: center;
  gap: 11px;
  border-bottom: 1px solid #e0e0e0;
}
.ctl,
.picker,
.search {
  height: 30px;
  display: flex;
  align-items: center;
  justify-content: center;
  background: #fff;
  border-radius: 8px;
  box-shadow: 0 0 0 1px #ececec, 0 1px 2px rgba(0, 0, 0, 0.3);
}
.nav {
  display: flex;
  gap: 1px;
}
.nav .ctl {
  width: 33px;
}
.nav svg {
  width: 10px;
  height: 16px;
}
.ctl.off {
  color: #b8b8b8;
}
.view {
  width: 65px;
  gap: 12px;
}
.grid-icon {
  width: 20px;
  height: 18px;
}
.chev {
  width: 12px;
  height: 8px;
}
.picker {
  padding: 0 3px 0 8px;
}
.picker select {
  flex: 1;
  min-width: 0;
  padding: 0 4px 2px 3px;
  appearance: none;
  background: none;
  border: none;
  opacity: 1;
}
.stepper {
  width: 24px;
  height: 24px;
  border-radius: 6px;
  color: #fff;
  background: linear-gradient(#4a92f9, #2d74f5);
}
.picker.off {
  color: #bdbdbd;
  box-shadow: 0 0 0 1px #f0f0f0, 0 1px 1px rgba(0, 0, 0, 0.12);
}
.picker.off .stepper {
  background: none;
  color: #b4b4b4;
}
.place {
  flex: 1;
  margin-left: 3px;
  padding-left: 11px;
}
.small-folder {
  width: 22px;
  height: 22px;
}
.place select {
  padding-left: 6px;
}
.search {
  width: 216px;
  gap: 10px;
  padding-left: 9px;
  margin-left: 5px;
}
.search svg {
  width: 19px;
  height: 19px;
}
.search input {
  flex: 1;
  min-width: 0;
  padding: 0;
  background: none;
  border: none;
}
.search input::placeholder {
  color: #bdbdbd;
}

.files {
  height: 163px;
  padding: 29px 0 0 33px;
  display: flex;
  gap: 57px;
  border-bottom: 1px solid #e0e0e0;
}
.file {
  width: 102px;
  display: flex;
  flex-direction: column;
  align-items: center;
  gap: 4px;
  font-size: 17px;
}
.thumb {
  width: 102px;
  height: 102px;
  padding: 15px 8px;
  border-radius: 6px;
}
.thumb svg {
  width: 86px;
  height: 74px;
}
.name {
  padding: 1px 5px 0;
  line-height: 22px;
  border-radius: 4px;
}
.chosen .thumb {
  background: #e4e4e4;
}
.chosen .name {
  background: #2a60da;
  color: #fff;
}

.options {
  flex: 1;
  padding: 22px 0 0 191px;
  display: grid;
  grid-template-columns: 60px 333px;
  grid-template-rows: 30px 52px 30px auto;
  column-gap: 14px;
  align-items: center;
}
.options > label,
.format {
  text-align: right;
  white-space: nowrap;
  padding-bottom: 2px;
}
.format {
  align-self: start;
  padding-top: 11px;
}
.checks {
  grid-column: 2;
  align-self: start;
  margin-top: 17px;
  padding-top: 5px;
  border-top: 2px solid #e2e2e2;
}
.checks label {
  height: 32px;
  display: flex;
  align-items: center;
  gap: 8px;
  margin-left: -4px;
}
.checks .off {
  color: #bdbdbd;
  margin-left: -3px;
}
.checks .nested {
  margin-left: 17px;
}
.checks input {
  appearance: none;
  width: 20px;
  height: 20px;
  border: 1px solid #cfcfcf;
  border-radius: 5px;
  background: #fff;
}
.checks .off input {
  border-color: #e2e2e2;
}

.actions {
  height: 87px;
  padding: 0 28px 1px 28px;
  display: flex;
  align-items: center;
  gap: 11px;
  border-top: 1px solid #e0e0e0;
}
.actions .ctl {
  width: 103px;
  padding-bottom: 2px;
}
.actions .small {
  width: 79px;
  margin-right: auto;
}
.actions .primary {
  color: #fff;
  background: linear-gradient(#4a92f9, #2d74f5);
  box-shadow: none;
}

/* 手写标注 */
.ink {
  position: absolute;
  left: 0;
  top: 0;
  width: 1920px;
  height: 1080px;
  pointer-events: none;
}
```
